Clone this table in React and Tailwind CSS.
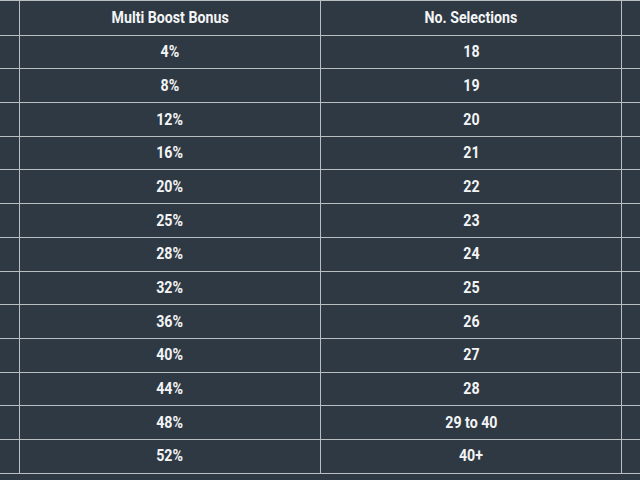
export default function App() {
  const rows = [
    ["4%", "18"],
    ["8%", "19"],
    ["12%", "20"],
    ["16%", "21"],
    ["20%", "22"],
    ["25%", "23"],
    ["28%", "24"],
    ["32%", "25"],
    ["36%", "26"],
    ["40%", "27"],
    ["44%", "28"],
    ["48%", "29 to 40"],
    ["52%", "40+"],
  ];
  const cell = "border border-[#b9bec3] text-center align-middle p-0";
  const txt = "inline-block scale-x-[0.86] pt-[1px]";
  return (
    <div
      className="w-[640px] h-[480px] overflow-hidden bg-[#2e3943] text-[#f3f4f5] text-[16.5px] font-bold"
      style={{ fontFamily: "Roboto, 'Noto Sans', sans-serif" }}
    >
      <table className="table-fixed border-collapse ml-[-282px] w-[1204px]">
        <colgroup>
          <col className="w-[301px]" />
          <col className="w-[301px]" />
          <col className="w-[301px]" />
          <col className="w-[301px]" />
        </colgroup>
        <thead>
          <tr className="h-[34.7px]">
            <th className={cell}></th>
            <th className={cell}><span className={txt}>Multi Boost Bonus</span></th>
            <th className={cell}><span className={txt}>No. Selections</span></th>
            <th className={cell}></th>
          </tr>
        </thead>
        <tbody>
          {rows.map(([a, b]) => (
            <tr key={a} className="h-[33.7px]">
              <td className={cell}></td>
              <td className={cell}><span className={txt}>{a}</span></td>
              <td className={cell}><span className={txt}>{b}</span></td>
              <td className={cell}></td>
            </tr>
          ))}
        </tbody>
      </table>
    </div>
  );
}
